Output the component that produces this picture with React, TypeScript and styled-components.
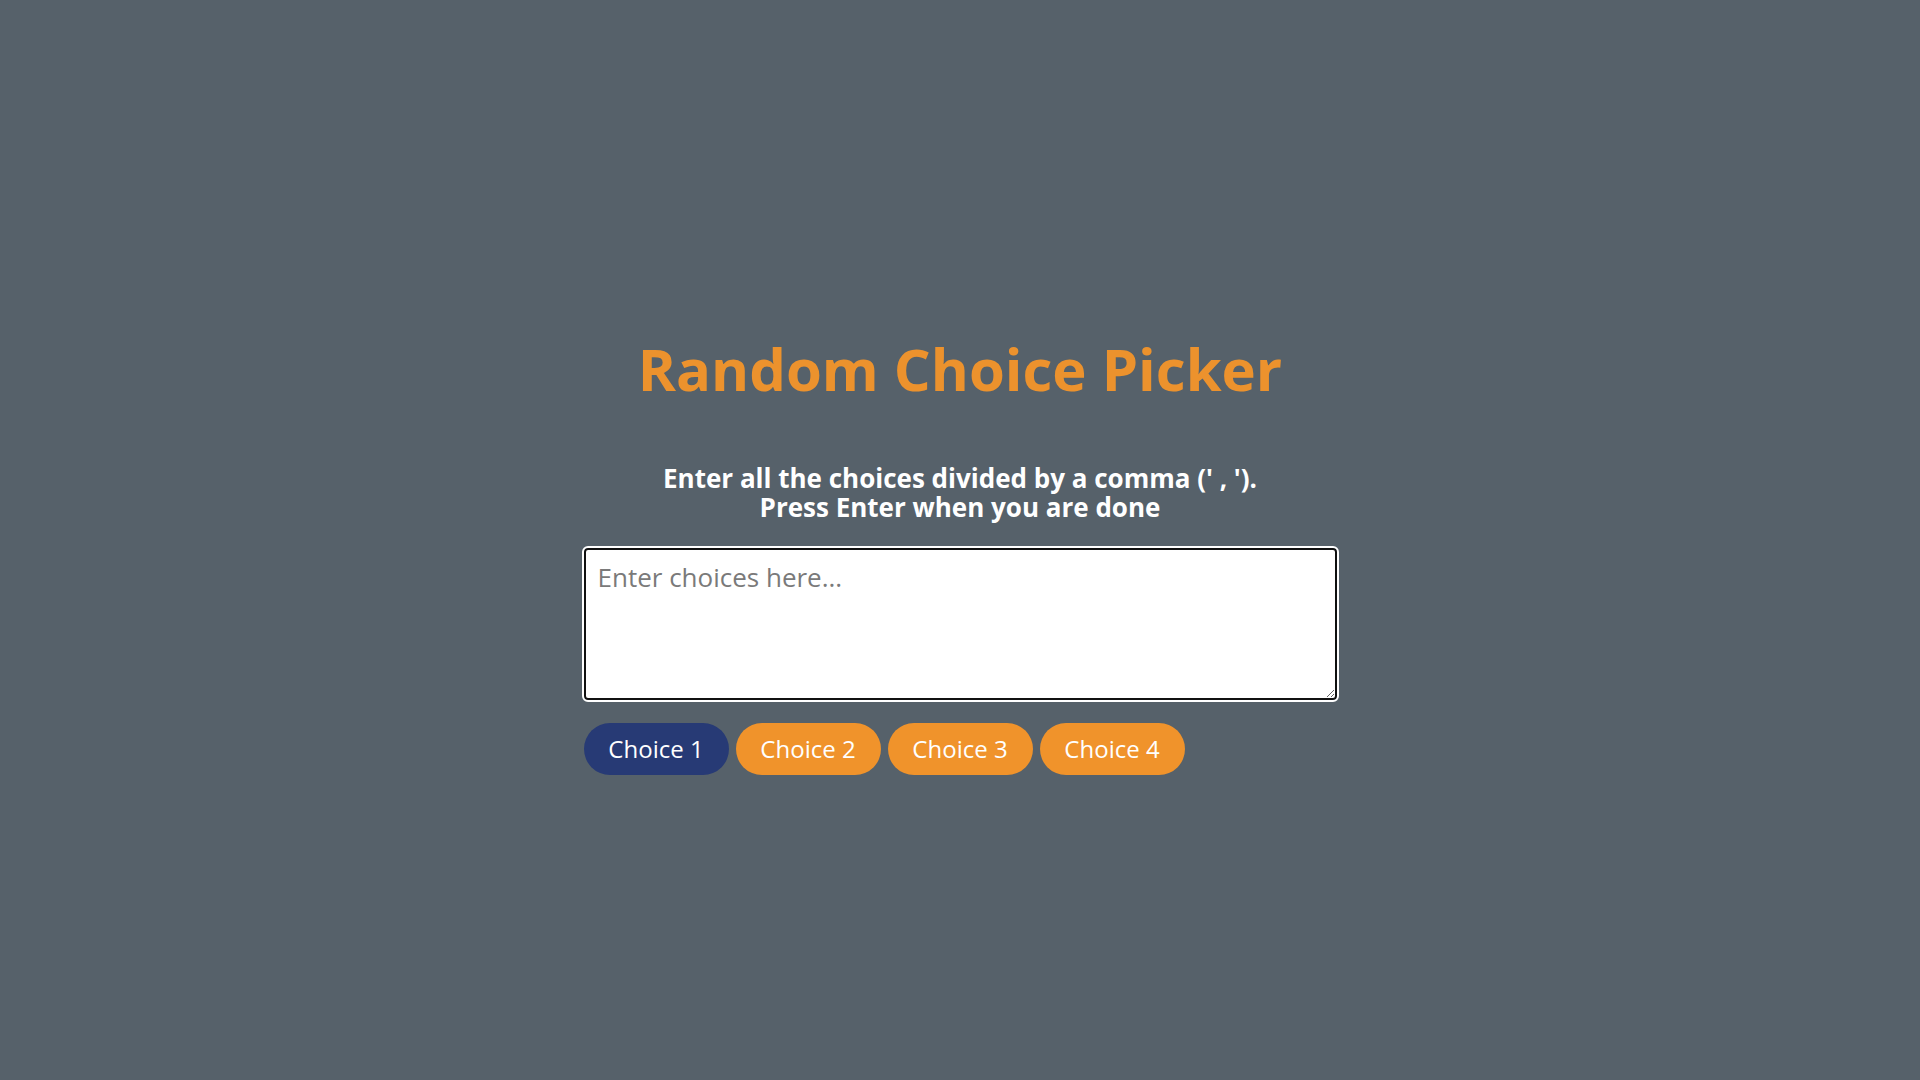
import styled, { createGlobalStyle } from 'styled-components';

const GlobalStyle = createGlobalStyle`
  * {
    box-sizing: border-box;
  }

  body {
    margin: 0;
    background-color: #56616a;
    font-family: 'Open Sans', 'Noto Sans', sans-serif;
  }
`;

const Page = styled.main`
  min-height: 100vh;
  display: flex;
  align-items: center;
  justify-content: center;
  padding-top: 30px;
`;

const Container = styled.div`
  width: 753px;
  display: flex;
  flex-direction: column;
`;

const Title = styled.h1`
  margin: 0 0 62px;
  color: #ec922d;
  font-size: 58px;
  line-height: 66px;
  font-weight: 700;
  text-align: center;
`;

const Hint = styled.h3`
  margin: 0 0 26px;
  color: #ffffff;
  font-size: 26px;
  line-height: 29px;
  font-weight: 700;
  text-align: center;
`;

const ChoicesInput = styled.textarea`
  width: 100%;
  height: 152px;
  padding: 9px 12px;
  border: 2px solid #111111;
  border-radius: 4px;
  background: #ffffff;
  font-family: 'Open Sans', 'Noto Sans', sans-serif;
  font-size: 26px;
  outline: 2px solid #ffffff;

  &::placeholder {
    color: #7a7a7a;
  }
`;

const Tags = styled.div`
  display: flex;
  gap: 7px;
  margin-top: 23px;
`;

const Tag = styled.span<{ $highlight?: boolean }>`
  display: inline-flex;
  align-items: center;
  justify-content: center;
  width: 145px;
  height: 52px;
  border-radius: 26px;
  background-color: ${(p) => (p.$highlight ? '#273a75' : '#f0932b')};
  color: #ffffff;
  font-size: 24px;
`;

const choices = ['Choice 1', 'Choice 2', 'Choice 3', 'Choice 4'];

export default function App() {
  return (
    <>
      <GlobalStyle />
      <Page>
        <Container>
          <Title>Random Choice Picker</Title>
          <Hint>
            Enter all the choices divided by a comma (' , ').
            <br />
            Press Enter when you are done
          </Hint>
          <ChoicesInput placeholder="Enter choices here..." />
          <Tags>
            {choices.map((c, i) => (
              <Tag key={c} $highlight={i === 0}>
                {c}
              </Tag>
            ))}
          </Tags>
        </Container>
      </Page>
    </>
  );
}
